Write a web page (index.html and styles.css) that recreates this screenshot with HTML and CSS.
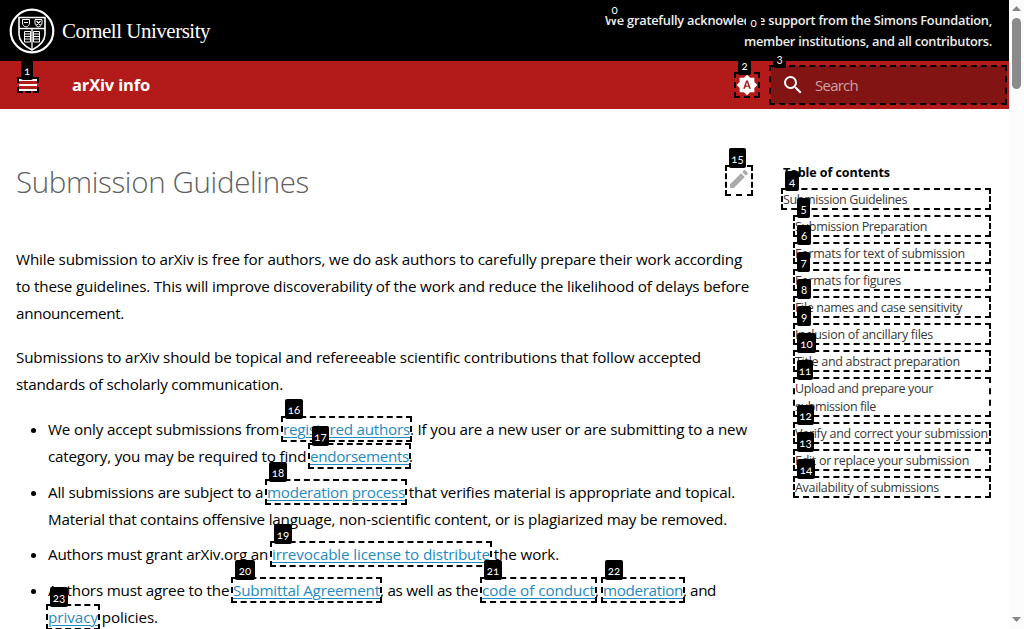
FILE: index.html
```html
<!DOCTYPE html>
<html lang="en">
<head>
<meta charset="utf-8">
<title>Submission Guidelines - arXiv info</title>
<link rel="stylesheet" href="styles.css">
</head>
<body>
<div class="page">
  <header class="brand">
    <div class="cornell">
      <svg class="seal" viewBox="0 0 46 46" width="46" height="46" fill="none" stroke="#fff">
        <circle cx="23" cy="23" r="21.3" stroke-width="2.2"/>
        <path d="M10 9.5H36V26C36 33 30 38.5 23 42 16 38.5 10 33 10 26Z" stroke-width="1.6"/>
        <path d="M10 20.500H36M23 21V41" stroke-width="1.3"/>
        <path d="M13.500 11.500H20.500V15C20.500 17 19 18.500 17 19 15 18.500 13.500 17 13.500 15ZM26 11.500H33V15C33 17 31.500 18.500 29.500 19 27.500 18.500 26 17 26 15Z" stroke-width="1"/>
        <path d="M15 14.500H19M27.500 13L31.500 17M31.500 13L27.500 17" stroke-width="1.2"/>
        <path d="M15.500 23.500H21.500V34H15.500ZM24.500 23.500H30.500V34H24.500Z" stroke-width="1"/>
        <path d="M16 26H21M16 28.500H21M16 31H21M25 26H30M25 28.500H30M25 31H30" stroke-width="1.2"/>
      </svg>
      <span class="wordmark" data-w="148">Cornell University</span>
    </div>
    <div class="support">
      <div><span data-w="387">We gratefully acknowledge support from the Simons Foundation,</span></div>
      <div><span data-w="248">member institutions, and all contributors.</span></div>
    </div>
  </header>
  <nav class="bar">
    <svg class="menu" viewBox="0 0 18 12" width="18" height="12" fill="#fff"><path d="M0 0H18V2H0ZM0 5H18V7H0ZM0 10H18V12H0Z"/></svg>
    <span class="site" data-w="78">arXiv info</span>
    <svg class="theme" viewBox="0 0 24 24" width="22" height="22" fill="#fff"><path d="M10.850 12.650h2.300L12 9l-1.150 3.650M20 8.690V4h-4.690L12 .69 8.690 4H4v4.690L.69 12 4 15.310V20h4.690L12 23.310 15.310 20H20v-4.690L23.310 12 20 8.690M14.300 16l-.7-2h-3.200l-.7 2H7.800L11 7h2l3.200 9h-1.900Z"/></svg>
    <div class="search">
      <svg viewBox="0 0 24 24" width="24" height="24" fill="#fff"><path d="M9.500 3A6.500 6.500 0 0 1 16 9.500c0 1.610-.59 3.090-1.560 4.230l.27.27h.79l5 5-1.500 1.500-5-5v-.79l-.27-.27A6.516 6.516 0 0 1 9.500 16 6.500 6.500 0 0 1 3 9.500 6.500 6.500 0 0 1 9.500 3m0 2C7 5 5 7 5 9.500S7 14 9.500 14 14 12 14 9.500 12 5 9.500 5Z"/></svg>
      <span data-w="43">Search</span>
    </div>
  </nav>
  <div class="content">
    <main class="article">
      <div class="heading">
        <h1><span data-w="293">Submission Guidelines</span></h1>
        <svg class="pencil" viewBox="0 0 24 24" width="24" height="24" fill="#ababab"><path d="M20.710 7.040c.39-.39.39-1.040 0-1.410l-2.340-2.340c-.37-.39-1.020-.39-1.410 0l-1.840 1.830 3.750 3.750M3 17.250V21h3.750L17.810 9.930l-3.750-3.750L3 17.250Z"/></svg>
      </div>
      <p>
        <span class="line"><span data-w="726">While submission to arXiv is free for authors, we do ask authors to carefully prepare their work according</span></span>
        <span class="line"><span data-w="733">to these guidelines. This will improve discoverability of the work and reduce the likelihood of delays before</span></span>
        <span class="line"><span data-w="108">announcement.</span></span>
      </p>
      <p>
        <span class="line"><span data-w="685">Submissions to arXiv should be topical and refereeable scientific contributions that follow accepted</span></span>
        <span class="line"><span data-w="267">standards of scholarly communication.</span></span>
      </p>
      <ul>
        <li>
          <span class="line"><span data-w="235">We only accept submissions from </span><a data-w="127">registered authors</a><span data-w="337">. If you are a new user or are submitting to a new</span></span>
          <span class="line"><span data-w="262">category, you may be required to find </span><a data-w="99">endorsements</a><span data-w="4">.</span></span>
        </li>
        <li>
          <span class="line"><span data-w="219">All submissions are subject to a </span><a data-w="138">moderation process</a><span data-w="330"> that verifies material is appropriate and topical.</span></span>
          <span class="line"><span data-w="679">Material that contains offensive language, non-scientific content, or is plagiarized may be removed.</span></span>
        </li>
        <li class="tight">
          <span class="line"><span data-w="224">Authors must grant arXiv.org an </span><a data-w="218">irrevocable license to distribute</a><span data-w="69"> the work.</span></span>
        </li>
        <li>
          <span class="line"><span data-w="185">Authors must agree to the </span><a data-w="147">Submittal Agreement</a><span data-w="102">, as well as the </span><a data-w="113">code of conduct</a><span data-w="8">, </span><a data-w="80">moderation</a><span data-w="33">, and</span></span>
          <span class="line"><a data-w="50">privacy</a><span data-w="60"> policies.</span></span>
        </li>
      </ul>
    </main>
    <aside class="toc">
      <div class="toc-title"><span data-w="107">Table of contents</span></div>
      <div class="top"><span data-w="124">Submission Guidelines</span></div>
      <div><span data-w="132">Submission Preparation</span></div>
      <div><span data-w="170">Formats for text of submission</span></div>
      <div><span data-w="106">Formats for figures</span></div>
      <div><span data-w="167">File names and case sensitivity</span></div>
      <div><span data-w="138">Inclusion of ancillary files</span></div>
      <div><span data-w="165">Title and abstract preparation</span></div>
      <div><span data-w="138">Upload and prepare your</span><br><span data-w="81">submission file</span></div>
      <div><span data-w="193">Verify and correct your submission</span></div>
      <div><span data-w="174">Edit or replace your submission</span></div>
      <div><span data-w="144">Availability of submissions</span></div>
    </aside>
  </div>
</div>
<div class="scrollbar">
  <svg viewBox="0 0 15 18" width="15" height="18" fill="#858585"><path d="M3 11L7.500 6 12 11Z"/></svg>
  <div class="thumb"></div>
  <svg class="down" viewBox="0 0 15 18" width="15" height="18" fill="#858585"><path d="M3 6L7.500 11 12 6Z"/></svg>
</div>
<div class="hints"></div>
<script src="script.js"></script>
</body>
</html>
```
FILE: styles.css
```css
* { box-sizing: border-box; }
body {
  margin: 0;
  height: 629px;
  display: flex;
  overflow: hidden;
  background: #fff;
  color: #000;
  font: 15.2px/27px "Open Sans", "Noto Sans", sans-serif;
}
.page { width: 1009px; height: 629px; overflow: hidden; }
[data-w] { white-space: pre; }
.brand {
  height: 61px;
  padding: 0 17px 0 9px;
  display: flex;
  justify-content: space-between;
  background: #000;
  color: #fff;
}
.cornell { display: flex; align-items: center; gap: 7px; }
.wordmark { font: 21px/30px "Liberation Serif", serif; padding-top: 1px; }
.support {
  padding-top: 10px;
  text-align: right;
  font-size: 12.8px;
  font-weight: 600;
  line-height: 21px;
  color: #eee;
}
.bar {
  height: 48px;
  display: flex;
  align-items: center;
  padding: 0 2px 0 19px;
  background: #b31b1b;
  color: #fff;
}
.site { margin-left: 35px; padding-bottom: 2px; font-size: 16.5px; font-weight: 700; }
.theme { margin-left: auto; }
.search {
  width: 236px;
  height: 38px;
  margin-left: 13px;
  padding-left: 10px;
  display: flex;
  align-items: center;
  gap: 10px;
  background: #821414;
  color: #cda1a1;
  font-size: 15px;
}
.content { display: flex; padding: 0 18px 0 16px; }
.article { width: 737px; }
.heading {
  height: 137px;
  padding-top: 53px;
  display: flex;
  justify-content: space-between;
  align-items: flex-start;
}
h1 { margin: 0; font-size: 29.5px; font-weight: 300; line-height: 40px; color: #606060; }
.pencil { margin: 5px 2px 0 0; }
p { margin: 0 0 17px; }
.line { display: flex; height: 27px; }
ul { margin: 18px 0 0; padding-left: 32px; }
li { margin-bottom: 9px; }
li.tight { margin: -1px 0 9px; }
a { color: #1f8bc4; text-decoration: underline; text-underline-offset: 2px; text-decoration-thickness: 1px; }
.toc { margin-left: 30px; padding-top: 55px; font-size: 12.5px; line-height: 18px; color: #383838; }
.toc div { margin: 0 0 9px 12px; }
.toc .toc-title, .toc .top { margin-left: 0; }
.toc-title { font-weight: 700; color: #000; }
.scrollbar {
  width: 15px;
  height: 629px;
  display: flex;
  flex-direction: column;
  align-items: center;
  background: #fcfcfc;
}
.thumb { width: 9px; height: 71px; border-radius: 5px; background: #8b8b8b; }
.down { margin-top: auto; }
.box { position: absolute; border: 2px dashed #000; }
.tag {
  position: absolute;
  height: 20px;
  border-radius: 2px;
  background: #000;
  color: #fff;
  font: 11.5px/21px Lato, "Open Sans", sans-serif;
  font-variant-numeric: oldstyle-nums;
  text-align: center;
}
```
FILE: script.js
```js
// Spread each text run over its measure.
document.querySelectorAll('[data-w]').forEach(function (el) {
  var width = el.getBoundingClientRect().width;
  var space = (Number(el.dataset.w) - width) / el.textContent.length;
  el.style.letterSpacing = space.toFixed(4) + 'px';
});

// Link hints: label, tag x, y, width, then the outlined area x, y, width, height.
var hints = [
  ['0', 608, -1, 13], ['0', 746, 12, 15],
  ['1', 21, 60, 12, 17, 77, 22, 16],
  ['2', 738, 55, 13, 734, 72, 26, 26],
  ['3', 773, 48, 13, 769, 65, 238, 40],
  ['4', 785, 171, 14, 781, 188, 210, 22],
  ['5', 797, 198, 13, 793, 215, 198, 22],
  ['6', 797, 225, 14, 793, 242, 198, 22],
  ['7', 797, 252, 13, 793, 269, 198, 22],
  ['8', 797, 279, 14, 793, 296, 198, 22],
  ['9', 797, 306, 14, 793, 323, 198, 22],
  ['10', 797, 333, 19, 793, 350, 198, 22],
  ['11', 797, 360, 16, 793, 377, 198, 40],
  ['12', 797, 405, 17, 793, 422, 198, 22],
  ['13', 797, 432, 17, 793, 449, 198, 22],
  ['14', 797, 459, 18, 793, 476, 198, 22],
  ['15', 729, 148, 17, 725, 165, 28, 31],
  ['16', 285, 399, 18, 281, 416, 131, 26],
  ['17', 312, 426, 17, 308, 443, 103, 26],
  ['18', 269, 462, 18, 265, 479, 142, 26],
  ['19', 274, 524, 18, 270, 541, 222, 26],
  ['20', 235, 560, 20, 231, 577, 151, 26],
  ['21', 484, 560, 18, 480, 577, 117, 26],
  ['22', 605, 560, 18, 601, 577, 84, 26],
  ['23', 50, 587, 18, 46, 604, 54, 26]
];
var layer = document.querySelector('.hints');
function add(cls, x, y, w, h) {
  var el = document.createElement('div');
  el.className = cls;
  el.style.left = x + 'px';
  el.style.top = y + 'px';
  el.style.width = w + 'px';
  if (h) el.style.height = h + 'px';
  layer.appendChild(el);
  return el;
}
hints.forEach(function (h) { if (h.length > 4) add('box', h[4], h[5], h[6], h[7]); });
hints.forEach(function (h) { add('tag', h[1], h[2], h[3]).textContent = h[0]; });
```
